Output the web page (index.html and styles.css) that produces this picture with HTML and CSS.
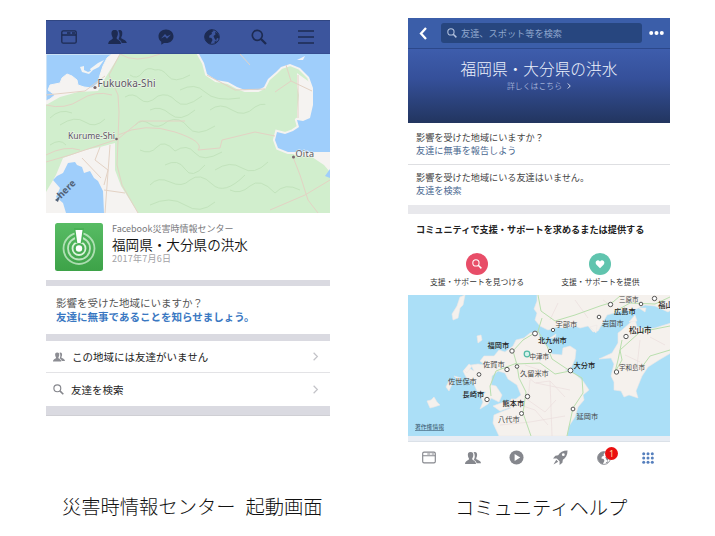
FILE: index.html
```html
<!DOCTYPE html>
<html lang="ja">
<head>
<meta charset="utf-8">
<title>災害時情報センター</title>
<link rel="stylesheet" href="styles.css">
</head>
<body>
<svg width="0" height="0" class="defs">
  <defs>
    <symbol id="feed" viewBox="0 0 16 14"><rect x=".8" y=".8" width="14.400" height="12.400" rx="1.500" fill="none" stroke="currentColor" stroke-width="1.300"/><path d="M1 5H15M6 3H9.500M11 3H14" stroke="currentColor" stroke-width="1.300"/></symbol>
    <symbol id="friends" viewBox="0 0 20 15"><path d="M12 0C15 0 15.500 2.500 15 5C14.700 6.500 14 7 14 8.500C14.300 10 19.500 10 20 14H14.500C14 11.500 12.500 10.800 11 10C12 8 12.500 6 12 3.500C11.800 2 11.300 1 10.500.700Z" fill="currentColor"/><path d="M7 0C10 0 10.800 2 10.300 5C10 6.800 9 7.400 9 8.800C9.300 10.800 13.500 10.500 13.800 15H0C.300 10.500 4.800 10.800 5 8.800C5 7.400 4 6.800 3.700 5C3.200 2 4 0 7 0Z" fill="currentColor"/></symbol>
    <symbol id="search" viewBox="0 0 16 16"><circle cx="6.300" cy="6.300" r="5" fill="none" stroke="currentColor" stroke-width="1.700"/><path d="M10 10L15 15" stroke="currentColor" stroke-width="2.300"/></symbol>
    <symbol id="chevron" viewBox="0 0 8 12"><path d="M1.500 1L6.500 6L1.500 11" fill="none" stroke="currentColor" stroke-width="1.600"/></symbol>
    <symbol id="globe" viewBox="0 0 16 16"><circle cx="8" cy="8" r="7.300" fill="var(--sea)" stroke="currentColor" stroke-width="1"/><path d="M.8 6.500C1.500 3 4.500.8 8 .8L9.500 2L7.500 3.500L8 5L5.500 6.500L5 8.500L7.500 9L8.500 11L6.500 15C3 14 .5 10.500.8 6.500ZM11 3L13.500 4L15 7V9.500L13 9L12 11.500L10.500 9.500L9.500 7L11.500 5.500ZM10 13L13 11.500L11.500 14.200Z" fill="currentColor"/></symbol>
  </defs>
</svg>
<main class="sheet">
  <figure class="panel panel-center">
    <section class="phone">
      <nav class="nav">
        <svg class="i-feed"><use href="#feed"/></svg>
        <svg class="i-friends"><use href="#friends"/></svg>
        <svg class="i16" viewBox="0 0 16 16"><path d="M8 .5C3.500.500.500 3.500.500 7.300C.500 9.700 1.500 11.600 3.300 12.800V15.700L6 14C12 14.800 15.500 11.500 15.500 7.300C15.500 3.500 12.500.500 8 .500Z" fill="currentColor"/><path d="M3 9.500L7 5L9 7.300L13 5.500L9 9.800L7 7.500Z" fill="#3c559d"/></svg>
        <svg class="i16"><use href="#globe"/></svg>
        <svg class="i16"><use href="#search"/></svg>
        <svg class="i16" viewBox="0 0 16 16"><path d="M0 2H16M0 8H16M0 14H16" stroke="currentColor" stroke-width="1.300"/></svg>
      </nav>
      <svg class="map-local" viewBox="46 54 284 159">
        <rect x="46" y="54" width="284" height="159" fill="#d1eecd"/>
        <path d="M46 105L60 97L78 92L98 91L104 80L120 54H46ZM56 175L63 158L85 150L100 147L115 143V170L121 186L138 213H46V192ZM330 150H287L295 155L312 157L324 165L330 172Z" fill="#f5f3f1"/>
        <path d="M298 75L312 85L314 110L305 123L298 120Z" fill="#f5f3f1" stroke="#f5f3f1" stroke-width="2"/>
        <g fill="none" stroke="#c2e3bc" stroke-width="1">
          <path d="M130 75Q137 80 142 73T155 70Q162 68 168 76T190 75M125 97Q133 92 140 99T158 96Q168 92 176 101T202 96M135 125Q142 118 150 124T168 121Q180 116 188 127T215 126M140 150Q150 155 157 147T175 151Q187 143 195 153T222 152M150 185Q158 176 170 182T190 180Q200 172 212 184T245 175M210 110Q220 102 232 110T255 107Q265 100 278 110M230 190Q240 195 250 186T275 193Q285 182 300 190M60 125Q75 115 85 122T105 119M215 170Q230 160 242 168T268 162M150 205Q170 195 185 205T215 202M165 165Q178 158 185 169T205 165M150 110Q160 105 170 114T195 110M180 90Q195 82 205 92T240 98M50 118Q60 108 72 113M50 145Q60 138 66 145"/>
        </g>
        <g fill="#9fcefb">
          <path d="M46 54H112L107 58L103 66L100 75L98 83L92 88L84 87L78 85L77 80L72 76L67 74L62 78L60 83L50 85L48 90L55 95L50 99L46 101Z" stroke="#f5f3f1" stroke-width="1"/>
          <path d="M199 54L204 63L207 74L216 80L228 82L237 87L245 90L258 90L264 87L268 79L276 72L281 67L290 64L300 68L309 77L313 88V105L310 118L303 121L297 120L299 127L293 131L285 134L277 132L275 140L278 148L288 152H332V52H200Z" stroke="#f5f3f1" stroke-width="4"/>
          <path d="M199 54L204 63L207 74L216 80L228 82L237 87L245 90L258 90L264 87L268 79L276 72L281 67L290 64L300 68L309 77L313 88V105L310 118L303 121L297 120L299 127L293 131L285 134L277 132L275 140L278 148L288 152H332V52H200Z"/>
          <path d="M53 180L57 176L63 173L68 163L75 162L77 165L82 167L84 173L90 171L94 178L98 181L103 191L104 213H66L63 203L56 197L60 188Z"/>
          <path d="M330 169L325 176L330 178Z"/>
        </g>
        <path d="M266 88Q273 78 285 74L295 79L299 95L296 118L285 130L262 100Z" fill="#d1eecd"/>
        <path d="M80 67L84 66V70L88 72L93 70L89 74L82 72ZM90 69L98 63L104 60L99 67L91 71ZM297 60L305 56L303 60Z" fill="#f3f4f4"/>
        <g fill="none" stroke="#e3d2c4" stroke-width="1">
          <path d="M120 54L109 75L118 95L119 112L118 140L117 165L122 185L138 213M46 162L70 155L118 139M118 135Q145 122 175 132T198 150M118 139L140 121H185M46 95L85 91L105 76M240 54L250 65M207 75L235 90L265 89M286 65L291 81L312 91M291 81L275 92M298 75V118M293 157L300 175L308 200L318 213M330 180L305 195L270 210M198 150L220 148L222 140L255 132L275 136M100 147L95 160L108 170L104 185M110 145L105 213M82 158L101 178M104 190L125 193"/>
          <path d="M46 105Q65 110 80 100T112 95M120 54Q135 64 160 54M46 155Q65 145 80 150"/>
        </g>
        <g class="city-latin">
          <text x="97.500" y="86.500" textLength="58">Fukuoka-Shi</text>
          <text x="68" y="138.500" textLength="47">Kurume-Shi</text>
          <text x="295.500" y="156.500" textLength="18.500">Oita</text>
        </g>
        <g fill="#77666b"><circle cx="95" cy="87.500" r="1.600"/><circle cx="116.500" cy="139" r="1.300"/><circle cx="293.500" cy="157" r="1.500"/></g>
        <text class="map-brand" transform="translate(61 199) rotate(-45)">here</text>
        <path d="M55 200L60 196L58 202Z" fill="#526277"/>
      </svg>
      <header class="crisis">
        <svg class="crisis-icon" viewBox="0 0 48 48">
          <defs><linearGradient id="leaf" x2="0" y2="1"><stop stop-color="#58bc64"/><stop offset="1" stop-color="#3da248"/></linearGradient></defs>
          <rect width="48" height="48" rx="2.500" fill="url(#leaf)"/>
          <g fill="none" stroke="#d9f3da" stroke-width="1.800"><circle cx="24" cy="25.500" r="15.500" opacity=".7"/><circle cx="24" cy="25.500" r="11" opacity=".8"/><circle cx="24" cy="25.500" r="6.500"/></g>
          <path d="M19 5H29L27.500 20H20.500Z" fill="#4ab256"/><path d="M20.500 7H27.500L25.700 20H22.300Z" fill="#fff"/><circle cx="24" cy="25.500" r="3.200" fill="#fff"/>
        </svg>
        <div class="crisis-text">
          <p class="kicker">Facebook災害時情報センター</p>
          <h1>福岡県・大分県の洪水</h1>
          <p class="date">2017年7月6日</p>
        </div>
      </header>
      <div class="prompt">
        <p>影響を受けた地域にいますか？</p>
        <a>友達に無事であることを知らせましょう。</a>
      </div>
      <div class="row"><svg class="row-friends"><use href="#friends"/></svg><span>この地域には友達がいません</span><svg class="chev"><use href="#chevron"/></svg></div>
      <div class="row row-last"><svg class="row-search"><use href="#search"/></svg><span>友達を検索</span><svg class="chev"><use href="#chevron"/></svg></div>
      <div class="foot-band"></div>
    </section>
    <figcaption class="cap-center"><span>災害時情報センター</span><span>起動画面</span></figcaption>
  </figure>

  <figure class="panel panel-help">
    <section class="phone">
      <div class="topbar">
        <svg class="back" viewBox="0 0 8 13"><path d="M7 1L2 6.500L7 12" fill="none" stroke="#fff" stroke-width="2.300"/></svg>
        <div class="searchbox"><svg><use href="#search"/></svg><span>友達、スポット等を検索</span></div>
        <svg class="more" viewBox="0 0 15 4"><g fill="#fff"><circle cx="2.200" cy="2" r="2"/><circle cx="7.500" cy="2" r="2"/><circle cx="12.800" cy="2" r="2"/></g></svg>
      </div>
      <div class="hero"><h2>福岡県・大分県の洪水</h2><p>詳しくはこちら<svg><use href="#chevron"/></svg></p></div>
      <div class="ask ask-first"><p>影響を受けた地域にいますか？</p><a>友達に無事を報告しよう</a></div>
      <div class="ask"><p>影響を受けた地域にいる友達はいません。</p><a>友達を検索</a></div>
      <div class="support">
        <h3>コミュニティで支援・サポートを求めるまたは提供する</h3>
        <div class="choices">
          <div class="choice find"><i><svg><use href="#search"/></svg></i><span>支援・サポートを見つける</span></div>
          <div class="choice give"><i><svg viewBox="0 0 12 12"><path d="M6 11L1.500 6.500C-1 3 3.500-.5 6 3C8.500-.5 13 3 10.500 6.500Z" fill="#fff"/></svg></i><span>支援・サポートを提供</span></div>
        </div>
      </div>
      <svg class="map-region" viewBox="408 295 262 141">
        <rect x="408" y="295" width="262" height="141" fill="#abdff7"/>
        <g fill="#f5f1ed" stroke="#eee7e5" stroke-width=".6">
          <path d="M537 294V301L534 309L537 313L535 320L540 326L548 330L557 327L565 328L575 326L580 328L588 326L593 332L598 331L602 324L607 315L614 313L622 310L632 311L645 305L655 306L668 312L671 310V294Z"/>
          <path d="M538 331L530 333L524 338L516 340L513 346L505 352L499 350L494 356L484 356L480 361L485 365L478 364L471 365L474 371L467 367L463 371L466 377L473 382L477 391L486 392L481 397L483 402L480 409L488 404L491 398L499 402L502 395L496 386L491 385L492 376L498 371L505 373L508 379L517 385L521 395L516 399L511 399L511 408L501 412L494 415L493 423L499 436H567L569 426L575 417L578 407L584 400L583 395L589 390L583 381L575 374L565 370L571 368L575 359L576 350L570 346L563 348L562 355L552 354L548 347L540 340Z"/>
          <path d="M618 333L622 330L631 322L635 319L637 327L646 329L655 328L671 323V353L659 360L648 367L642 376L636 391L638 398L629 395L624 397L621 391L614 390L614 382L611 376L614 364L611 358L599 359L612 353L618 343Z"/>
          <path d="M460 297L465 295L463 305L460 308L458 318L453 320L452 314L457 306ZM477 336L481 335L482 340L478 343ZM427 401L431 400L434 397L437 402L440 405L434 407L430 408ZM446 387L449 381L453 382L449 391ZM464 370L469 364L472 366L467 373ZM454 376L461 378L459 381ZM629 322L635 315L637 321ZM639 308L646 308L645 312ZM590 327L597 325L596 333ZM550 338L556 334L555 338ZM493 406L501 403L511 401L511 407L500 411Z"/>
        </g>
        <g fill="none" stroke="#eadada" stroke-width=".6"><path d="M520 370L535 383L550 381L565 397M530 380L528 400L545 412L556 400M520 405L535 410L548 425M525 365L543 371M550 381L552 436M536 383L570 390M500 425L530 422L565 416M550 320L558 303M575 300L588 318M603 300L613 307M640 340L637 366M625 355L640 362M650 337L665 345"/></g>
        <g fill="none" stroke="#b9dfae" stroke-width="1"><path d="M538 295L541 311L555 321L575 315L600 306L613 302L620 296M542 318L538 331L523 340L513 351L517 365L519 378L526 392L523 413L531 436M517 363L496 371L490 386L491 396M515 364L540 363L555 374L570 371L582 378L583 393L573 408L567 436M538 331L547 346L552 359L570 371M622 340L618 360L615 372L622 360L620 350L640 332L670 326M670 350L650 356L642 367M614 312L630 303L655 304L670 297"/></g>
        <g class="markers"><circle cx="512" cy="351" r="2.200"/><circle cx="507" cy="369.500" r="2.200"/><circle cx="517" cy="366.500" r="1.800"/><circle cx="479" cy="374.500" r="1.900"/><circle cx="487" cy="399.500" r="2.200"/><circle cx="527.500" cy="396.500" r="2.200"/><circle cx="521.500" cy="413.500" r="2"/><circle cx="535" cy="333.500" r="2.400"/><circle cx="550" cy="351" r="1.700"/><circle cx="553" cy="330" r="1.700"/><circle cx="570.500" cy="370.500" r="2.400"/><circle cx="573" cy="409" r="1.900"/><circle cx="599" cy="317" r="1.800"/><circle cx="610.500" cy="304.500" r="2.200"/><circle cx="641" cy="304" r="1.800"/><circle cx="654.500" cy="298.500" r="2.200"/><circle cx="626" cy="336.500" r="2.200"/><circle cx="616.500" cy="372" r="2.200"/></g>
        <g class="city">
          <g class="major"><text x="487.500" y="347.500">福岡市</text><text x="462.500" y="396.500">長崎市</text><text x="502.500" y="405.500">熊本市</text><text x="538" y="342.800">北九州市</text><text x="573.500" y="367.500">大分市</text><text class="big" x="629" y="333">松山市</text><text x="614" y="313.500">広島市</text><text class="big" x="658" y="307.800">福山市</text></g>
          <text x="483" y="367">佐賀市</text><text x="448" y="383.500">佐世保市</text><text x="498" y="422">八代市</text><text x="520" y="375.800">久留米市</text><text class="tight" x="529.500" y="359">中津市</text><text x="555.500" y="327">宇部市</text><text x="602" y="326">岩国市</text><text class="tight" x="619" y="301.700">三原市</text><text class="tight" x="619" y="369.800">宇和島市</text><text x="576.500" y="418.500">延岡市</text>
        </g>
        <circle cx="527" cy="354" r="2.800" fill="#d5f2eb" stroke="#52b9a5" stroke-width="1.200"/>
        <text class="legal" x="415" y="429">著作権情報</text>
      </svg>
      <div class="map-foot"></div>
      <nav class="tabs">
        <svg class="t-feed"><use href="#feed"/></svg>
        <svg class="t-friends"><use href="#friends"/></svg>
        <svg class="t-play" viewBox="0 0 16 16"><circle cx="8" cy="8" r="7.500" fill="currentColor"/><path d="M6 4.300L12 8L6 11.700Z" fill="#fff"/></svg>
        <svg class="t-rocket" viewBox="0 0 16 16"><path d="M15.500.5C10.500.500 7.500 2.500 5.500 5.500L2.500 6L0 9L4 9L7 12L7 16L10 13.500L10.500 10.500C13.500 8.500 15.500 5.500 15.500.500ZM3.500 10.500L.500 15.500L5.500 12.500Z" fill="currentColor"/><circle cx="11" cy="5" r="1.500" fill="#fff"/></svg>
        <div class="t-globe"><svg><use href="#globe"/></svg><b>1</b></div>
        <svg class="t-grid" viewBox="0 0 12 12"><g fill="#557fbd"><circle cx="1.700" cy="1.700" r="1.500"/><circle cx="6" cy="1.700" r="1.500"/><circle cx="10.300" cy="1.700" r="1.500"/><circle cx="1.700" cy="6" r="1.500"/><circle cx="6" cy="6" r="1.500"/><circle cx="10.300" cy="6" r="1.500"/><circle cx="1.700" cy="10.300" r="1.500"/><circle cx="6" cy="10.300" r="1.500"/><circle cx="10.300" cy="10.300" r="1.500"/></g></svg>
      </nav>
    </section>
    <figcaption class="cap-help">コミュニティヘルプ</figcaption>
  </figure>
</main>
</body>
</html>
```
FILE: styles.css
```css
* { box-sizing: border-box; margin: 0; padding: 0; }
body {
  width: 715px; height: 536px; overflow: hidden; background: #fff;
  font-family: "Noto Sans CJK JP", "Noto Sans", sans-serif; color: #222;
}
svg { display: block; flex: none; }
.defs { position: absolute; }
p, h1, h2, h3, a, span { white-space: nowrap; }
a { display: block; }
.sheet { display: flex; align-items: flex-start; gap: 78px; padding: 18px 45px 0 46px; }
.panel-center { width: 284px; padding-top: 2px; }
.panel-help { width: 262px; }
figcaption { font-weight: 300; font-size: 19.300px; line-height: 26px; color: #111; white-space: nowrap; }

/* Crisis centre screen */
.nav {
  height: 34px; padding: 0 16px 0 15px; display: flex; align-items: center; justify-content: space-between;
  background: #3c559d; border-top: 1px solid #304682; border-bottom: 1px solid #354d91; color: #1d2b52; --sea: #3c559d;
}
.i16 { width: 16px; height: 16px; }
.i-feed { width: 16px; height: 14px; }
.i-friends { width: 19px; height: 14px; }
.map-local { width: 284px; height: 159px; }
.city-latin { font: 10px "Noto Sans", sans-serif; fill: #5a5560; stroke: #f3f7f0; stroke-width: 1px; paint-order: stroke; }
.city-latin text:nth-child(2) { font-size: 8.700px; }
.city-latin text:nth-child(3) { font-size: 9px; }
.map-brand { font: bold 9.500px "Noto Sans", sans-serif; fill: #526277; }
.crisis { display: flex; height: 73px; padding: 10px 9px 0; gap: 9px; border-bottom: 6px solid #dadae1; }
.crisis-icon { width: 48px; height: 48px; }
.kicker { font-size: 9px; line-height: 12px; color: #77777b; }
.crisis h1 { font-size: 13.600px; line-height: 18px; font-weight: 350; color: #111; }
.date { font-size: 9px; line-height: 12px; color: #a2a2a6; letter-spacing: .250px; }
.prompt { height: 55px; padding: 10px 10px 0; font-size: 10.500px; line-height: 14px; color: #555; border-bottom: 7px solid #dadae1; }
.prompt a { color: #3a78c2; font-weight: 700; }
.row { height: 32px; display: flex; align-items: center; padding: 0 11px 0 7px; font-size: 10.500px; color: #222; border-bottom: 1px solid #e3e3e6; }
.row span { flex: 1; }
.row-last { height: 33px; border: 0; }
.row-friends { width: 12px; height: 10px; margin-right: 7px; color: #8c8d93; }
.row-search { width: 11px; height: 11px; margin-right: 7px; color: #85868c; }
.chev { width: 7px; height: 9px; color: #c3c3c8; }
.foot-band { height: 10px; background: #dadae1; border-bottom: 1px solid #cfcfd4; }
.cap-center { display: flex; gap: 10px; padding: 77px 0 0 16px; }

/* Community help screen */
.topbar { height: 31px; background: #3b5ea9; border-bottom: 1px solid #2c488b; display: flex; align-items: center; padding: 0 6px 0 11px; }
.back { width: 8px; height: 13px; margin-right: 14px; }
.searchbox { width: 201px; height: 20px; border-radius: 3px; background: #27467f; display: flex; align-items: center; gap: 4px; padding-left: 6px; font-size: 9.200px; color: #8fa6ce; }
.searchbox svg { width: 10px; height: 10px; color: #b4c3df; }
.more { width: 15px; height: 4px; margin-left: 7px; }
.hero { height: 74px; padding-top: 9px; background: linear-gradient(#3e5dac, #35509a 40%, #22355f); text-align: center; color: #edf2fc; }
.hero h2 { font-size: 15.700px; line-height: 22px; font-weight: 300; }
.hero p { display: flex; justify-content: center; align-items: center; gap: 5px; font-size: 7.900px; line-height: 12px; font-weight: 300; color: #cad6ef; }
.hero p svg { width: 4px; height: 6px; color: #fff; }
.ask { height: 40px; padding: 6px 8px 0; font-size: 9.130px; line-height: 13px; color: #444; }
.ask-first { height: 42px; padding-top: 8px; border-bottom: 1px solid #dedfe2; }
.ask a { color: #4a6890; }
.support { height: 90px; border-top: 9px solid #e8e8ec; }
.support h3 { font-size: 9.160px; line-height: 14px; padding: 8px 8px 0; color: #222; font-weight: 700; }
.choices { display: flex; padding: 17px 0 0 22px; gap: 37px; }
.choice { display: flex; flex-direction: column; align-items: center; font-size: 7.850px; line-height: 12px; color: #333; }
.choice i { width: 22px; height: 22px; border-radius: 50%; display: grid; place-items: center; margin-bottom: 1px; }
.find i { background: #e84d68; color: #fff; }
.give i { background: #60c4ae; }
.choice svg { width: 10px; height: 10px; }
.map-region { width: 262px; height: 141px; }
.markers { fill: #fff; stroke: #555; stroke-width: 1px; }
.city { font-size: 7.200px; fill: #444; }
.city .tight { font-size: 6.500px; }
.major { font-weight: 500; fill: #222; }
.major .big { font-size: 7.500px; }
.legal { font-size: 5.800px; fill: #34546a; text-decoration: underline; }
.map-foot { height: 6px; background: #e8edf4; border-bottom: 1px solid #dbe1e8; }
.tabs { height: 31px; display: flex; align-items: center; color: #85878d; --sea: #fff; padding-left: 14px; }
.t-feed { width: 14px; height: 13px; }
.t-friends { width: 16px; height: 12px; margin-left: 29px; }
.t-play { width: 15px; height: 15px; margin-left: 28px; }
.t-rocket { width: 15px; height: 15px; margin-left: 29px; }
.t-globe { position: relative; width: 14px; height: 14px; margin-left: 29px; }
.t-globe svg { width: 14px; height: 14px; }
.t-globe b { position: absolute; left: 8px; top: -4px; width: 13px; height: 13px; border-radius: 50%; background: #ea1010; color: #ffd9a0; font: 9px/13px "Noto Sans", sans-serif; text-align: center; }
.t-grid { width: 12px; height: 12px; margin-left: 31px; }
.cap-help { padding: 21px 0 0 47px; }
```
